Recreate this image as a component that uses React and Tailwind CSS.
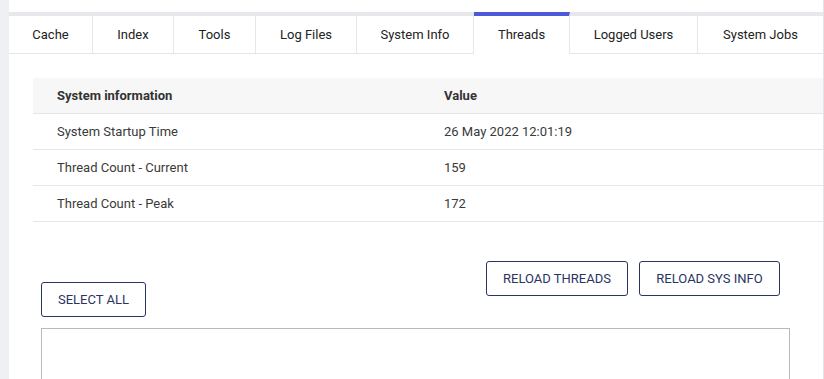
import React from "react";

const tabs = [
  { label: "Cache", w: "w-[84px]" },
  { label: "Index", w: "w-[81px]" },
  { label: "Tools", w: "w-[82px]" },
  { label: "Log Files", w: "w-[101px]" },
  { label: "System Info", w: "w-[117px]" },
  { label: "Threads", w: "w-[96px]", active: true },
  { label: "Logged Users", w: "w-[128px]" },
  { label: "System Jobs", w: "flex-1", last: true },
];

const rows = [
  ["System Startup Time", "26 May 2022 12:01:19"],
  ["Thread Count - Current", "159"],
  ["Thread Count - Peak", "172"],
];

export default function App() {
  return (
    <div className="flex min-h-[379px] h-[379px] overflow-hidden bg-white font-['Roboto',sans-serif] text-[13px] text-[#333]">
      <div className="w-[9px] shrink-0 bg-[#eef0f3]" />
      <div className="flex-1 pt-[12px] border-r border-[#e3e4e8]">
        <div className="flex">
          {tabs.map((t) => (
            <div
              key={t.label}
              className={
                t.active
                  ? `${t.w} h-[42px] flex items-center justify-center border-t-4 border-t-[#4f58d6] border-r border-r-[#e6e6e6] text-[#222]`
                  : t.last
                  ? `${t.w} h-[42px] flex items-center justify-center border-t-4 border-t-[#e7e8ec] border-b border-b-[#e6e6e6] text-[#222]`
                  : `${t.w} h-[42px] flex items-center justify-center border-t-4 border-t-[#e7e8ec] border-r border-r-[#e6e6e6] border-b border-b-[#e6e6e6] text-[#222]`
              }
            >
              {t.label}
            </div>
          ))}
        </div>

        <div className="ml-[24px] mt-[24px]">
          <div className="flex h-[36px] items-center bg-[#f7f7f7] border-b border-[#e6e6e6] font-bold text-[#333]">
            <div className="w-[387px] pl-[24px]">System information</div>
            <div className="flex-1 pl-[24px]">Value</div>
          </div>
          {rows.map((r) => (
            <div key={r[0]} className="flex h-[36px] items-center border-b border-[#e6e6e6] text-[#3a3a3a]">
              <div className="w-[387px] pl-[24px]">{r[0]}</div>
              <div className="flex-1 pl-[24px]">{r[1]}</div>
            </div>
          ))}
        </div>

        <div className="ml-[32px] mr-[33px] mt-[39px]">
          <div className="flex items-start justify-between pr-[10px]">
            <button className="mt-[21px] w-[105px] h-[35px] border border-[#2a3463] rounded-[3px] text-[#2a3463] text-[13px] uppercase">
              Select All
            </button>
            <div className="flex gap-[11px]">
              <button className="w-[142px] h-[35px] border border-[#2a3463] rounded-[3px] text-[#2a3463] text-[13px] uppercase">
                Reload Threads
              </button>
              <button className="w-[141px] h-[35px] border border-[#2a3463] rounded-[3px] text-[#2a3463] text-[13px] uppercase">
                Reload Sys Info
              </button>
            </div>
          </div>
          <div className="mt-[11px] h-[120px] border border-[#b9b9b9]" />
        </div>
      </div>
    </div>
  );
}
